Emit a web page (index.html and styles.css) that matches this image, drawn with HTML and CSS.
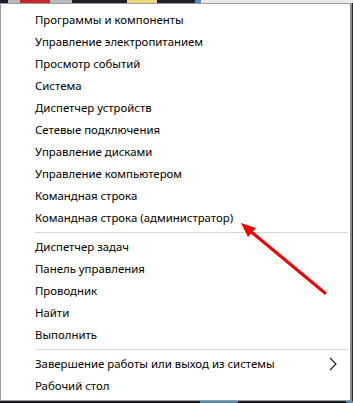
FILE: index.html
```html
<html>
<head>
    <link rel="stylesheet" href="styles.css">
</head>
<body>
    <div class="desk-top">
        <span class="d-dark" style="width:8px"></span>
        <span class="d-gray" style="width:64px"><i class="d-red"></i></span>
        <span class="d-dark" style="width:55px"></span>
        <span class="d-yellow" style="width:30px"></span>
        <span class="d-dark" style="width:38px"></span>
        <span class="d-blue" style="width:6px"></span>
        <span class="d-light" style="flex:1"></span>
    </div>

    <div class="screen">
        <section class="menu">
            <div class="group">
                <div class="item">Программы и компоненты</div>
                <div class="item">Управление электропитанием</div>
                <div class="item">Просмотр событий</div>
                <div class="item">Система</div>
                <div class="item">Диспетчер устройств</div>
                <div class="item">Сетевые подключения</div>
                <div class="item">Управление дисками</div>
                <div class="item">Управление компьютером</div>
                <div class="item">Командная строка</div>
                <div class="item">Командная строка (администратор)</div>
            </div>
            <div class="sep"></div>
            <div class="group">
                <div class="item">Диспетчер задач</div>
                <div class="item">Панель управления</div>
                <div class="item">Проводник</div>
                <div class="item">Найти</div>
                <div class="item">Выполнить</div>
            </div>
            <div class="sep"></div>
            <div class="group">
                <div class="item has-sub">
                    <span>Завершение работы или выход из системы</span>
                    <svg class="chev" width="8" height="14" viewBox="0 0 8 14">
                        <path d="M1 1 L7 7 L1 13" fill="none" stroke="#1a1a1a" stroke-width="1.1"/>
                    </svg>
                </div>
                <div class="item">Рабочий стол</div>
            </div>
        </section>
        <div class="desk-right"></div>
    </div>

    <div class="desk-bottom">
        <span class="d-dark" style="width:200px"></span>
        <span class="d-blue" style="width:38px"></span>
        <span class="d-dark" style="flex:1"></span>
        <span class="d-blue" style="width:7px"></span>
    </div>

    <!-- red pointer drawn over the menu -->
    <svg class="arrow" width="353" height="403" viewBox="0 0 353 403">
        <line x1="325" y1="293" x2="249" y2="230" stroke="#f20000" stroke-width="3" stroke-linecap="round"/>
        <polygon points="241,223 256,228 248,237" fill="#f20000"/>
    </svg>
</body>
</html>
```

FILE: styles.css
```css
body {
    margin: 0;
    width: 353px;
    height: 403px;
    overflow: hidden;
    background: #1c1c1c;
    font-family: "Noto Sans", Roboto, sans-serif;
}

.desk-top, .desk-bottom {display: flex; height: 3px;}
.desk-bottom {height: 2px;}
.desk-top span, .desk-bottom span {display: block; height: 100%; position: relative;}
.d-dark {background: #1b1f26;}
.d-gray {background: #b9b9b9;}
.d-red {position: absolute; left: 12px; top: 0; width: 30px; height: 3px; background: #c8262a;}
.d-yellow {background: #e9d77a;}
.d-blue {background: #4a8cc2;}
.d-light {background: #e8e8e8;}

.screen {display: flex; height: 398px;}

.menu {
    border: 1px solid #9d9d9d;
    border-right: 2px solid #8c8c8c;
    background: #fff;
    padding: 5px 0;
    box-sizing: border-box;
    width: 352px;
}

.desk-right {flex: 1; background: #2a2a2a;}

.item {
    height: 22px;
    line-height: 22px;
    padding-left: 34px;
    font-size: 11.4px;
    color: #000;
    white-space: nowrap;
}

.has-sub {display: flex; align-items: center; justify-content: space-between; padding-right: 13px;}
.has-sub span {line-height: 22px;}

.sep {
    height: 1px;
    background: #d6d6d6;
    margin: 3px 3px 3px 34px;
}

.arrow {position: absolute; left: 0; top: 0; pointer-events: none;}
```
